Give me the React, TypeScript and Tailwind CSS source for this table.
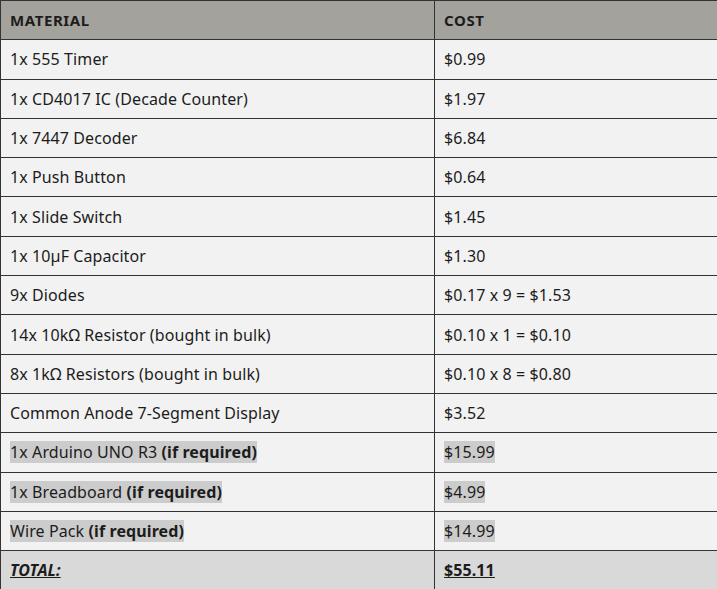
const rows: [string, string][] = [
  ["1x 555 Timer", "$0.99"],
  ["1x CD4017 IC (Decade Counter)", "$1.97"],
  ["1x 7447 Decoder", "$6.84"],
  ["1x Push Button", "$0.64"],
  ["1x Slide Switch", "$1.45"],
  ["1x 10µF Capacitor", "$1.30"],
  ["9x Diodes", "$0.17 x 9 = $1.53"],
  ["14x 10kΩ Resistor (bought in bulk)", "$0.10 x 1 = $0.10"],
  ["8x 1kΩ Resistors (bought in bulk)", "$0.10 x 8 = $0.80"],
  ["Common Anode 7-Segment Display", "$3.52"],
];

const optional: [string, string][] = [
  ["1x Arduino UNO R3", "$15.99"],
  ["1x Breadboard", "$4.99"],
  ["Wire Pack", "$14.99"],
];

const cell = "border border-[#333333] px-[9px] align-middle";

export default function App() {
  return (
    <div
      className="w-[717px] h-[589px] overflow-hidden bg-[#f2f2f2] text-[#1c1c1c]"
      style={{ fontFamily: '"Noto Sans", "DejaVu Sans", sans-serif' }}
    >
      <table className="w-[760px] border-collapse text-[16px] leading-5 tracking-[0.1px]">
        <colgroup>
          <col className="w-[434px]" />
          <col />
        </colgroup>
        <thead>
          <tr className="h-[39.3px] bg-[#a4a29d]">
            <th className={`${cell} text-left text-[15px] font-bold tracking-[0.6px]`}>MATERIAL</th>
            <th className={`${cell} text-left text-[15px] font-bold tracking-[0.6px]`}>COST</th>
          </tr>
        </thead>
        <tbody>
          {rows.map(([name, cost]) => (
            <tr key={name} className="h-[39.3px]">
              <td className={cell}>{name}</td>
              <td className={cell}>{cost}</td>
            </tr>
          ))}
          {optional.map(([name, cost]) => (
            <tr key={name} className="h-[39.3px]">
              <td className={cell}>
                <span className="bg-[#cccccc]">
                  {name} <b>(if required)</b>
                </span>
              </td>
              <td className={cell}>
                <span className="bg-[#cccccc]">{cost}</span>
              </td>
            </tr>
          ))}
          <tr className="h-[39.3px] bg-[#d9d9d9]">
            <td className={cell}>
              <i className="font-bold underline">TOTAL:</i>
            </td>
            <td className={cell}>
              <b className="underline">$55.11</b>
            </td>
          </tr>
        </tbody>
      </table>
    </div>
  );
}
